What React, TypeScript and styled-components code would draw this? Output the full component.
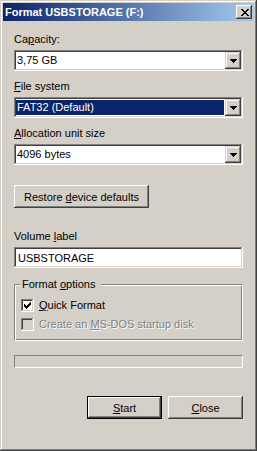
import React from "react";
import styled, { createGlobalStyle } from "styled-components";

// classic windows palette
const face = "#d4d0c8";
const shadow = "#808080";
const dark = "#404040";
const hilite = "#ffffff";
const navy = "#0a246a";

const GlobalStyle = createGlobalStyle`
  html, body {
    margin: 0;
    padding: 0;
    background: ${face};
  }
  body {
    font-family: "Liberation Sans", Arial, sans-serif;
    font-size: 11px;
    color: #000;
  }
  * {
    box-sizing: border-box;
  }
`;

const raisedEdge = `
  box-shadow: inset -1px -1px ${dark}, inset 1px 1px ${face},
    inset -2px -2px ${shadow}, inset 2px 2px ${hilite};
`;

const buttonEdge = `
  box-shadow: inset -1px -1px ${dark}, inset 1px 1px ${hilite},
    inset -2px -2px ${shadow}, inset 2px 2px ${face};
`;

const sunkenEdge = `
  box-shadow: inset -1px -1px ${hilite}, inset 1px 1px ${shadow},
    inset -2px -2px ${face}, inset 2px 2px ${dark};
`;

const Window = styled.div`
  width: 257px;
  height: 451px;
  padding: 3px;
  background: ${face};
  display: flex;
  flex-direction: column;
  ${raisedEdge}
`;

const TitleBar = styled.div`
  height: 18px;
  display: flex;
  align-items: center;
  justify-content: space-between;
  padding: 0 2px 0 2px;
  background: linear-gradient(to right, ${navy}, #a6caf0);
  color: #fff;
  font-weight: bold;
  font-size: 11px;
  line-height: 13px;
`;

const CaptionButton = styled.div`
  width: 16px;
  height: 14px;
  background: ${face};
  display: flex;
  align-items: center;
  justify-content: center;
  padding-left: 1px;
  ${buttonEdge}
`;

const Body = styled.div`
  flex: 1;
  display: flex;
  flex-direction: column;
  padding: 0 11px;
`;

const Label = styled.div<{ $gap: number }>`
  margin-top: ${({ $gap }) => $gap}px;
  margin-bottom: 4px;
  height: 13px;
  line-height: 13px;
  white-space: nowrap;
`;

const Key = styled.span`
  text-decoration: underline;
  text-underline-offset: 1px;
`;

const Combo = styled.div`
  height: 21px;
  padding: 2px;
  background: #fff;
  display: flex;
  align-items: center;
  ${sunkenEdge}
`;

const ComboValue = styled.div<{ $selected?: boolean }>`
  flex: 1;
  height: 15px;
  line-height: 15px;
  margin-right: 1px;
  padding-left: 1px;
  background: ${({ $selected }) => ($selected ? navy : "transparent")};
  color: ${({ $selected }) => ($selected ? "#fff" : "#000")};
  white-space: nowrap;
`;

const DropButton = styled.div`
  width: 16px;
  height: 17px;
  background: ${face};
  display: flex;
  align-items: center;
  justify-content: center;
  ${raisedEdge}
`;

const PushButton = styled.div<{ $width: number; $default?: boolean }>`
  width: ${({ $width }) => $width}px;
  height: 23px;
  display: flex;
  align-items: center;
  justify-content: center;
  background: ${face};
  white-space: nowrap;
  ${({ $default }) =>
    $default
      ? `box-shadow: inset 0 0 0 1px #000, inset -2px -2px ${dark}, inset 2px 2px ${hilite}, inset -3px -3px ${shadow};`
      : buttonEdge}
`;

const RestoreButton = styled(PushButton)`
  margin-top: 20px;
`;

const TextBox = styled.div`
  height: 21px;
  padding: 0 4px;
  background: #fff;
  display: flex;
  align-items: center;
  ${sunkenEdge}
`;

const GroupBox = styled.div`
  position: relative;
  margin-top: 16px;
  height: 57px;
  border: 1px solid;
  border-color: ${shadow} ${hilite} ${hilite} ${shadow};
  box-shadow: inset 1px 1px ${hilite}, inset -1px -1px ${shadow};
  padding: 14px 0 0 6px;
  display: flex;
  flex-direction: column;
  gap: 6px;
`;

const Legend = styled.div`
  position: absolute;
  top: -7px;
  left: 5px;
  padding: 0 6px 0 2px;
  height: 13px;
  line-height: 13px;
  background: ${face};
`;

const CheckRow = styled.div<{ $disabled?: boolean }>`
  display: flex;
  align-items: center;
  gap: 5px;
  height: 13px;
  line-height: 13px;
  color: ${({ $disabled }) => ($disabled ? shadow : "#000")};
  text-shadow: ${({ $disabled }) => ($disabled ? `1px 1px ${hilite}` : "none")};
`;

const CheckBox = styled.div<{ $disabled?: boolean }>`
  width: 13px;
  height: 13px;
  padding: 3px;
  background: ${({ $disabled }) => ($disabled ? face : "#fff")};
  ${sunkenEdge}
`;

const Progress = styled.div`
  margin-top: 14px;
  height: 13px;
  border: 1px solid;
  border-color: ${shadow} ${hilite} ${hilite} ${shadow};
`;

const ButtonRow = styled.div`
  margin-top: 28px;
  display: flex;
  justify-content: flex-end;
  gap: 6px;
`;

// small bitmap glyphs, drawn pixel by pixel
const Pixels: React.FC<{ rows: string[]; color?: string }> = ({ rows, color = "#000" }) => (
  <svg
    width={rows[0].length}
    height={rows.length}
    viewBox={`0 0 ${rows[0].length} ${rows.length}`}
    shapeRendering="crispEdges"
    style={{ display: "block" }}
  >
    {rows.map((row, y) =>
      row.split("").map((c, x) =>
        c === "#" ? <rect key={`${x}-${y}`} x={x} y={y} width={1} height={1} fill={color} /> : null
      )
    )}
  </svg>
);

const closeGlyph = [
  "##....##",
  ".##..##.",
  "..####..",
  "...##...",
  "..####..",
  ".##..##.",
  "##....##",
];

const arrowGlyph = ["#######", ".#####.", "..###..", "...#..."];

const checkGlyph = [
  "......#",
  ".....##",
  "#...###",
  "##.###.",
  "#####..",
  ".###...",
  "..#....",
];

const ComboBox: React.FC<{ value: string; selected?: boolean }> = ({ value, selected }) => (
  <Combo>
    <ComboValue $selected={selected}>{value}</ComboValue>
    <DropButton>
      <Pixels rows={arrowGlyph} />
    </DropButton>
  </Combo>
);

export default function App() {
  return (
    <>
      <GlobalStyle />
      <Window>
        <TitleBar>
          <span>Format USBSTORAGE (F:)</span>
          <CaptionButton>
            <Pixels rows={closeGlyph} />
          </CaptionButton>
        </TitleBar>
        <Body>
          <Label $gap={12}>
            Ca<Key>p</Key>acity:
          </Label>
          <ComboBox value="3,75 GB" />

          <Label $gap={9}>
            <Key>F</Key>ile system
          </Label>
          <ComboBox value="FAT32 (Default)" selected />

          <Label $gap={9}>
            <Key>A</Key>llocation unit size
          </Label>
          <ComboBox value="4096 bytes" />

          <RestoreButton $width={135}>
            <span>
              Restore <Key>d</Key>evice defaults
            </span>
          </RestoreButton>

          <Label $gap={22}>
            Volume <Key>l</Key>abel
          </Label>
          <TextBox>USBSTORAGE</TextBox>

          <GroupBox>
            <Legend>
              Format <Key>o</Key>ptions
            </Legend>
            <CheckRow>
              <CheckBox>
                <Pixels rows={checkGlyph} />
              </CheckBox>
              <span>
                <Key>Q</Key>uick Format
              </span>
            </CheckRow>
            <CheckRow $disabled>
              <CheckBox $disabled />
              <span>
                Create an <Key>M</Key>S-DOS startup disk
              </span>
            </CheckRow>
          </GroupBox>

          <Progress />

          <ButtonRow>
            <PushButton $width={75} $default>
              <span>
                <Key>S</Key>tart
              </span>
            </PushButton>
            <PushButton $width={75}>
              <span>
                <Key>C</Key>lose
              </span>
            </PushButton>
          </ButtonRow>
        </Body>
      </Window>
    </>
  );
}
